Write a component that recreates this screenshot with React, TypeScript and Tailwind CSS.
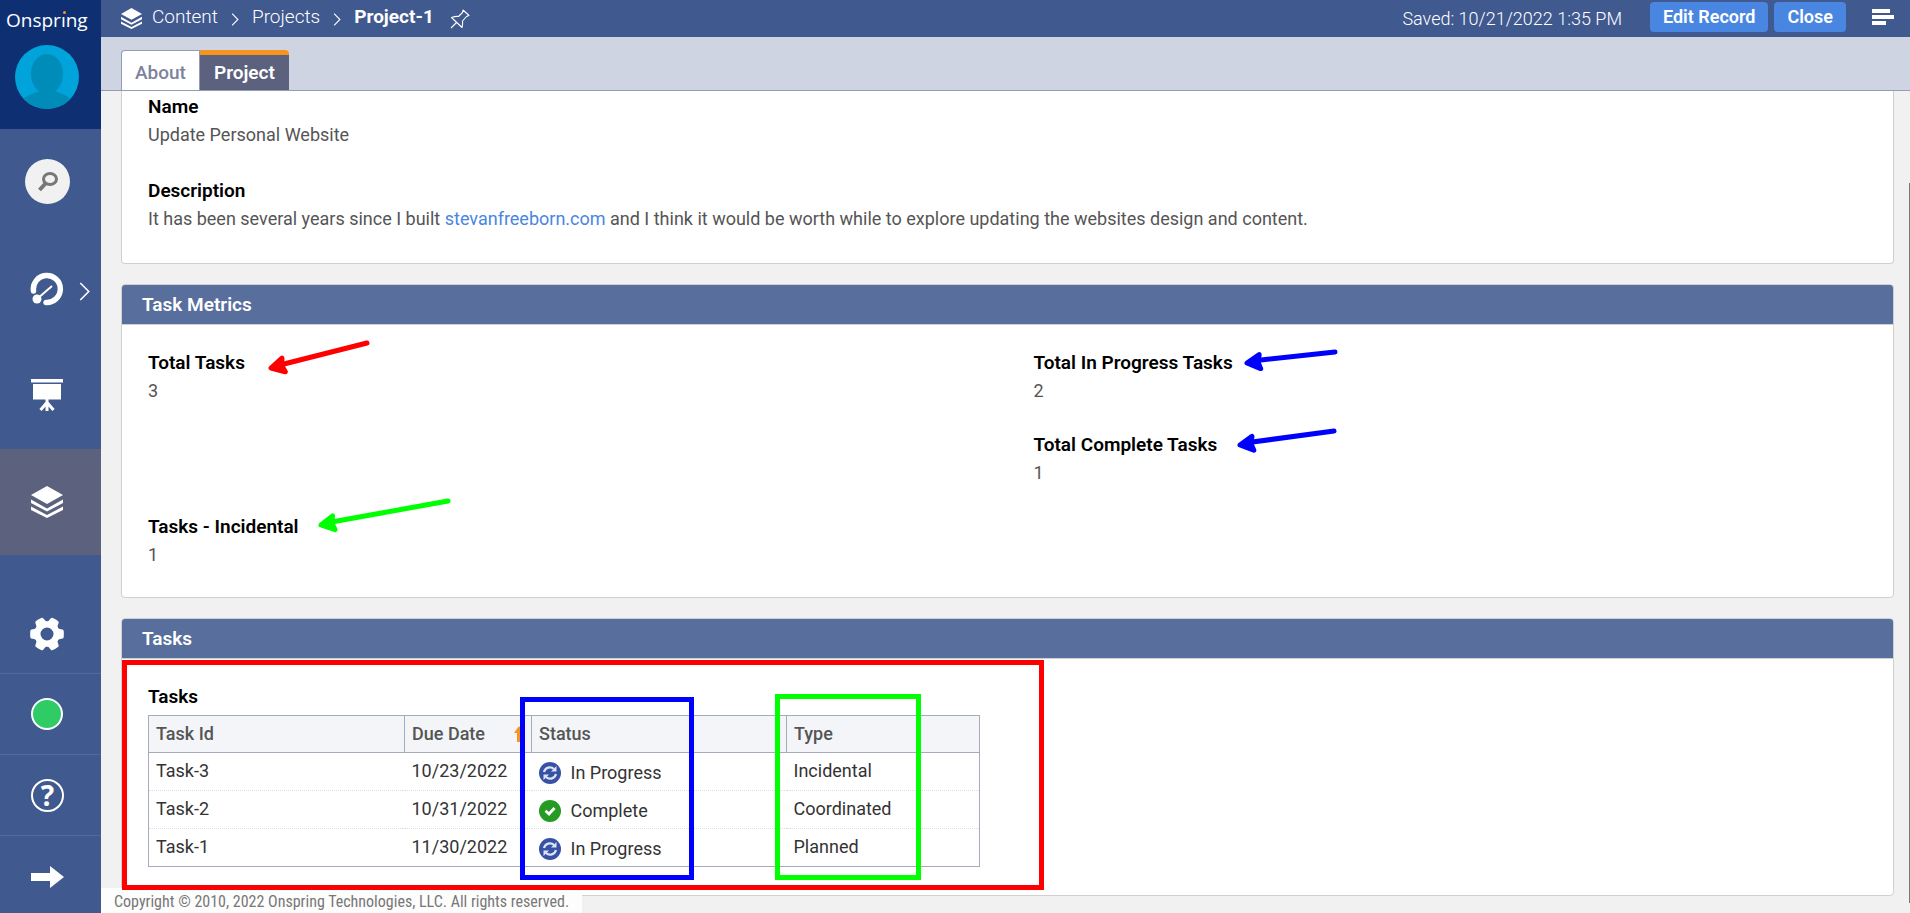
import type { ReactNode } from "react";

function Layers({ className }: { className: string }) {
  return (
    <svg viewBox="0 0 32 32" className={className} fill="currentColor" aria-hidden="true">
      <path d="M16 0 32 9 16 18 0 9Z" />
      <path d="M0 13.5 16 22.5 32 13.5V17L16 25.5 0 17Z" />
      <path d="M0 20.5 16 29 32 20.5V24L16 32 0 24Z" />
    </svg>
  );
}

function Chevron({ className }: { className: string }) {
  return (
    <svg viewBox="0 0 10 18" className={className} fill="none" stroke="currentColor" strokeWidth="1.5" aria-hidden="true">
      <path d="M1 1 9 9 1 17" />
    </svg>
  );
}

function Arrow({ className, w, h, color }: { className: string; w: number; h: number; color: string }) {
  const angle = (Math.atan2(-(h - 12), w - 8) * 180) / Math.PI;
  const y = h - 8;
  return (
    <svg width={w} height={h} className={"pointer-events-none absolute overflow-visible " + className} aria-hidden="true">
      <line x1="8" y1={y - 1} x2={w - 3} y2="3" stroke={color} strokeWidth="5" strokeLinecap="round" />
      <g transform={`translate(3 ${y + 1}) rotate(${angle})`}>
        <path d="M0 0 13 -7 11 0 13 7Z" fill={color} stroke={color} strokeWidth="5" strokeLinejoin="round" />
      </g>
    </svg>
  );
}

function Field({ label, children }: { label: string; children: ReactNode }) {
  return (
    <div>
      <dt className="text-[19px] leading-6 font-semibold text-black">{label}</dt>
      <dd className="mt-1 text-[18px] leading-6 text-[#555]">{children}</dd>
    </div>
  );
}

function Card({ title, children }: { title: string; children: ReactNode }) {
  return (
    <section className="relative mt-5 rounded border border-[#d0d0d0] bg-white">
      <h2 className="h-10 rounded-t-[3px] border-b border-[#d0d0d0] bg-[#586e9c] px-5 text-[19px] leading-10 font-semibold text-white">{title}</h2>
      {children}
    </section>
  );
}

function StatusIcon({ status }: { status: string }) {
  return status === "Complete" ? (
    <svg viewBox="0 0 22 22" className="size-[22px]" aria-hidden="true">
      <circle cx="11" cy="11" r="11" fill="#259b24" />
      <path d="M6.5 10.8 10 14 15.5 8" fill="none" stroke="#fff" strokeWidth="2.8" />
    </svg>
  ) : (
    <svg viewBox="0 0 22 22" className="size-[22px]" aria-hidden="true">
      <circle cx="11" cy="11" r="11" fill="#3752a4" />
      <path d="M5 10A6 6 0 0 1 15 7M17 12A6 6 0 0 1 7 15" fill="none" stroke="#dfe4f3" strokeWidth="2.2" />
      <path d="M17.5 4V9.5H12ZM4.5 18V12.5H10Z" fill="#dfe4f3" />
    </svg>
  );
}

const tasks = [
  { id: "Task-3", due: "10/23/2022", status: "In Progress", type: "Incidental" },
  { id: "Task-2", due: "10/31/2022", status: "Complete", type: "Coordinated" },
  { id: "Task-1", due: "11/30/2022", status: "In Progress", type: "Planned" },
];

const gearTeeth = [0, 60, 120, 180, 240, 300];

function Sidebar() {
  return (
    <nav aria-label="Main" className="flex w-[101px] shrink-0 flex-col bg-[#40598f] text-white">
      <div className="flex h-[129px] shrink-0 flex-col bg-[#0f2f73] pl-1.5">
        <a href="#home" className="mt-2 h-6 font-['Open_Sans',sans-serif] text-[19px] leading-6">
          Onspr<span className="relative">ı<span className="absolute top-1 left-[2px] size-[3px] rounded-full bg-[#f7941d]" /></span>ng
        </a>
        <button aria-label="Profile" className="mt-[13px] ml-[9px] size-16">
          <svg viewBox="0 0 64 64" className="size-16">
            <clipPath id="face"><circle cx="32" cy="32" r="32" /></clipPath>
            <g clipPath="url(#face)">
              <rect width="64" height="64" fill="#00a3da" />
              <ellipse cx="32" cy="29" rx="16" ry="20" fill="#008cb8" />
              <path d="M8 54Q14 49 25 46V40H39V46Q50 49 56 54V64H8Z" fill="#008cb8" />
            </g>
          </svg>
        </button>
      </div>
      <button aria-label="Search" className="mt-[30px] ml-[25px] flex size-[45px] shrink-0 items-center justify-center rounded-full bg-[#f1f1f1] text-[#777]">
        <svg viewBox="0 0 20 20" className="size-5" fill="none" stroke="currentColor" strokeWidth="3">
          <ellipse cx="12" cy="7" rx="6.5" ry="5.5" /><path d="M7.5 11.5 1.5 18" strokeWidth="4" />
        </svg>
      </button>
      <button aria-label="Dashboards" className="mt-8 flex h-[105px] shrink-0 items-center gap-[15px] pl-[30px]">
        <svg viewBox="0 0 34 34" className="size-[34px]">
          <path d="M3.5 19A13.5 13.5 0 1 1 16 30.5" fill="none" stroke="currentColor" strokeWidth="5.5" strokeLinecap="round" />
          <path d="M7 27 22 14" stroke="currentColor" strokeWidth="2" /><circle cx="7" cy="27" r="4.5" fill="currentColor" />
        </svg>
        <Chevron className="mt-1.5 h-[19px] w-[11px]" />
      </button>
      <button aria-label="Reports" className="flex h-[108px] shrink-0 items-center pl-[31px]">
        <svg viewBox="0 0 32 32" className="size-8" fill="currentColor">
          <path d="M0 0H32V3.5H0ZM2 5H30V20.5H2Z" />
          <path d="M16 20V32M15.5 24 9.5 31M16.5 24 22.5 31" stroke="currentColor" strokeWidth="3" />
        </svg>
      </button>
      <button aria-label="Content" className="flex h-[106px] shrink-0 items-center bg-[#5c627e] pl-[31px]"><Layers className="size-8" /></button>
      <div className="mt-auto flex flex-col">
        <button aria-label="Administration" className="flex h-[79px] items-center pl-[30px]">
          <svg viewBox="-17 -17 34 34" className="size-[34px]" fill="currentColor">
            <circle r="9.5" fill="none" stroke="currentColor" strokeWidth="6" />
            {gearTeeth.map((a) => (
              <path key={a} transform={`rotate(${a})`} d="M9 -7.5Q12 -4.5 15.5 -4.5Q16.5 -4.5 16.7 -3Q17 0 16.7 3Q16.5 4.5 15.5 4.5Q12 4.5 9 7.5Z" />
            ))}
          </svg>
        </button>
        <button aria-label="Status" className="flex h-[81px] items-center border-t border-[#536a9b] pl-[31px]"><span className="size-8 rounded-full border-2 border-white bg-[#2fcc66]" /></button>
        <button aria-label="Help" className="flex h-[81px] items-center border-t border-[#536a9b] pl-[31px]">
          <span className="flex size-[33px] items-center justify-center rounded-full border-2 border-white font-['Noto_Sans',sans-serif] text-[28px] leading-none font-bold">?</span>
        </button>
        <button aria-label="Expand menu" className="flex h-[78px] items-center border-t border-[#536a9b] pt-1 pl-[31px]">
          <svg viewBox="0 0 33 22" className="h-[22px] w-[33px]" fill="currentColor"><path d="M0 7H19V0L33 11 19 22V15H0Z" /></svg>
        </button>
      </div>
    </nav>
  );
}

export default function App() {
  return (
    <div className="relative flex h-screen overflow-hidden bg-[#f1f1f1] font-['Roboto',sans-serif]">
      <Sidebar />
      <div className="flex min-w-0 grow flex-col">
        <header className="flex h-[37px] shrink-0 items-center bg-[#40598f] pr-4 pb-[3px] pl-5 text-white">
          <Layers className="mt-0.5 size-[21px]" />
          <nav aria-label="Breadcrumb" className="ml-2.5 flex items-center text-[19px] leading-8 font-light">
            <a href="#content">Content</a>
            <Chevron className="mx-[13px] mt-1 h-[13px] w-2" />
            <a href="#projects">Projects</a>
            <Chevron className="mx-[13px] mt-1 h-[13px] w-2" />
            <span className="font-bold">Project-1</span>
          </nav>
          <button aria-label="Pin" className="mt-1 ml-4">
            <svg viewBox="0 0 20 20" className="size-5" fill="none" stroke="currentColor" strokeWidth="1.1" strokeLinejoin="round">
              <path d="M13 1 19 6.5 16.5 7.5 12.5 12Q13 15 12 18.5L1.5 8.5Q6 7 8.5 7.5L12.5 3.5ZM6.5 13.5 1 19" />
            </svg>
          </button>
          <p className="mt-1 ml-auto text-[18px] leading-6 font-light">Saved: 10/21/2022 1:35 PM</p>
          <button className="ml-7 h-[30px] rounded bg-[#4986e2] px-[13px] text-[18px] leading-[30px] font-semibold">Edit Record</button>
          <button className="ml-1.5 h-[30px] rounded bg-[#4986e2] px-[13px] text-[18px] leading-[30px] font-semibold">Close</button>
          <button aria-label="Menu" className="ml-[26px]">
            <svg viewBox="0 0 22 16" className="h-4 w-[22px]" fill="none" stroke="currentColor" strokeWidth="4"><path d="M0 2H18M0 8H22M0 14H14" /></svg>
          </button>
        </header>
        <div role="tablist" className="flex h-[54px] shrink-0 items-end border-b border-[#929cb5] bg-[#ced4e2] pl-5 text-[19px] leading-6 font-medium">
          <button role="tab" aria-selected="false" className="flex h-10 items-center justify-center rounded-tl border border-b-0 border-[#929cb5] bg-white px-[13px] pt-1 text-[#7d839c]">About</button>
          <button role="tab" aria-selected="true" className="flex h-10 items-center justify-center rounded-tr border-t-[5px] border-[#f7941d] bg-[#5c627e] px-[14px] font-semibold text-white">Project</button>
        </div>
        <main className="min-h-0 grow overflow-y-auto pr-4 pl-5 [scrollbar-width:none]">
          <section className="rounded-b border border-t-0 border-[#d0d0d0] bg-white px-[26px] pt-1 pb-8">
            <dl className="flex flex-col gap-8">
              <Field label="Name">Update Personal Website</Field>
              <Field label="Description">
                It has been several years since I built <a href="#site" className="text-[#4986e2]">stevanfreeborn.com</a> and I think it would be worth while to explore updating the websites design and content.
              </Field>
            </dl>
          </section>
          <Card title="Task Metrics">
            <dl className="grid grid-cols-2 gap-y-[30px] pt-[26px] pb-[30px] *:pl-[26px]">
              <Field label="Total Tasks">3</Field>
              <Field label="Total In Progress Tasks">2</Field>
              <div className="col-start-2"><Field label="Total Complete Tasks">1</Field></div>
              <div className="col-start-1"><Field label="Tasks - Incidental">1</Field></div>
            </dl>
            <Arrow className="top-[55px] left-[146px]" w={102} h={35} color="#ff0000" />
            <Arrow className="top-[213px] left-[196px]" w={133} h={34} color="#00ff00" />
            <Arrow className="top-[64px] left-[1122px]" w={94} h={21} color="#0000ff" />
            <Arrow className="top-[143px] left-[1115px]" w={100} h={24} color="#0000ff" />
          </Card>
          <Card title="Tasks">
            <div className="px-[26px] pt-[26px] pb-7">
              <h3 className="text-[19px] leading-6 font-semibold text-black">Tasks</h3>
              <table className="mt-1.5 w-[832px] table-fixed border-collapse border border-[#a5abbb] text-left text-[18px] leading-6 text-[#333]">
                <thead className="bg-[#f3f5f9] text-[#555]">
                  <tr className="h-[37px]">
                    <th className="w-[256px] border border-[#a5abbb] px-[7px] font-medium">Task Id</th>
                    <th className="w-[127px] border border-[#a5abbb] px-[7px] font-medium">
                      <span className="flex items-center justify-between">
                        Due Date
                        <svg viewBox="0 0 10 16" className="h-4 w-2.5 shrink-0" fill="#f7941d" aria-label="Sorted ascending"><path d="M5 0 10 7H7V16H3V7H0Z" /></svg>
                      </span>
                    </th>
                    <th className="w-[255px] border border-[#a5abbb] px-[7px] font-medium">Status</th>
                    <th className="border border-[#a5abbb] px-[7px] font-medium">Type</th>
                  </tr>
                </thead>
                <tbody>
                  {tasks.map((t) => (
                    <tr key={t.id} className="h-[38px] border-b border-dotted border-[#ddd] last:border-solid last:border-[#a5abbb]">
                      <td className="px-[7px] pb-0.5">{t.id}</td>
                      <td className="px-[7px] pb-0.5">{t.due}</td>
                      <td className="px-[7px] pt-0.5"><span className="flex items-center gap-2.5"><StatusIcon status={t.status} />{t.status}</span></td>
                      <td className="px-[7px] pb-0.5">{t.type}</td>
                    </tr>
                  ))}
                </tbody>
              </table>
            </div>
            <div className="pointer-events-none absolute top-[41px] left-0 z-20 h-[230px] w-[922px] border-[5px] border-[#ff0000]" />
            <div className="pointer-events-none absolute top-[78px] left-[398px] z-20 h-[183px] w-[174px] border-[5px] border-[#0000ff]" />
            <div className="pointer-events-none absolute top-[75px] left-[653px] z-20 h-[186px] w-[146px] border-[5px] border-[#00ff00]" />
          </Card>
          <div className="h-4" />
        </main>
      </div>
      <footer className="absolute bottom-0 left-[101px] z-10 h-[25px] bg-[#fdfdfd] px-[13px] font-['Roboto_Condensed',Roboto,sans-serif] text-[16px] leading-7 text-[#777]">
        Copyright © 2010, 2022 Onspring Technologies, LLC. All rights reserved.
      </footer>
      <div className="absolute top-[183px] right-0 bottom-2.5 w-px bg-[#777]" />
    </div>
  );
}
